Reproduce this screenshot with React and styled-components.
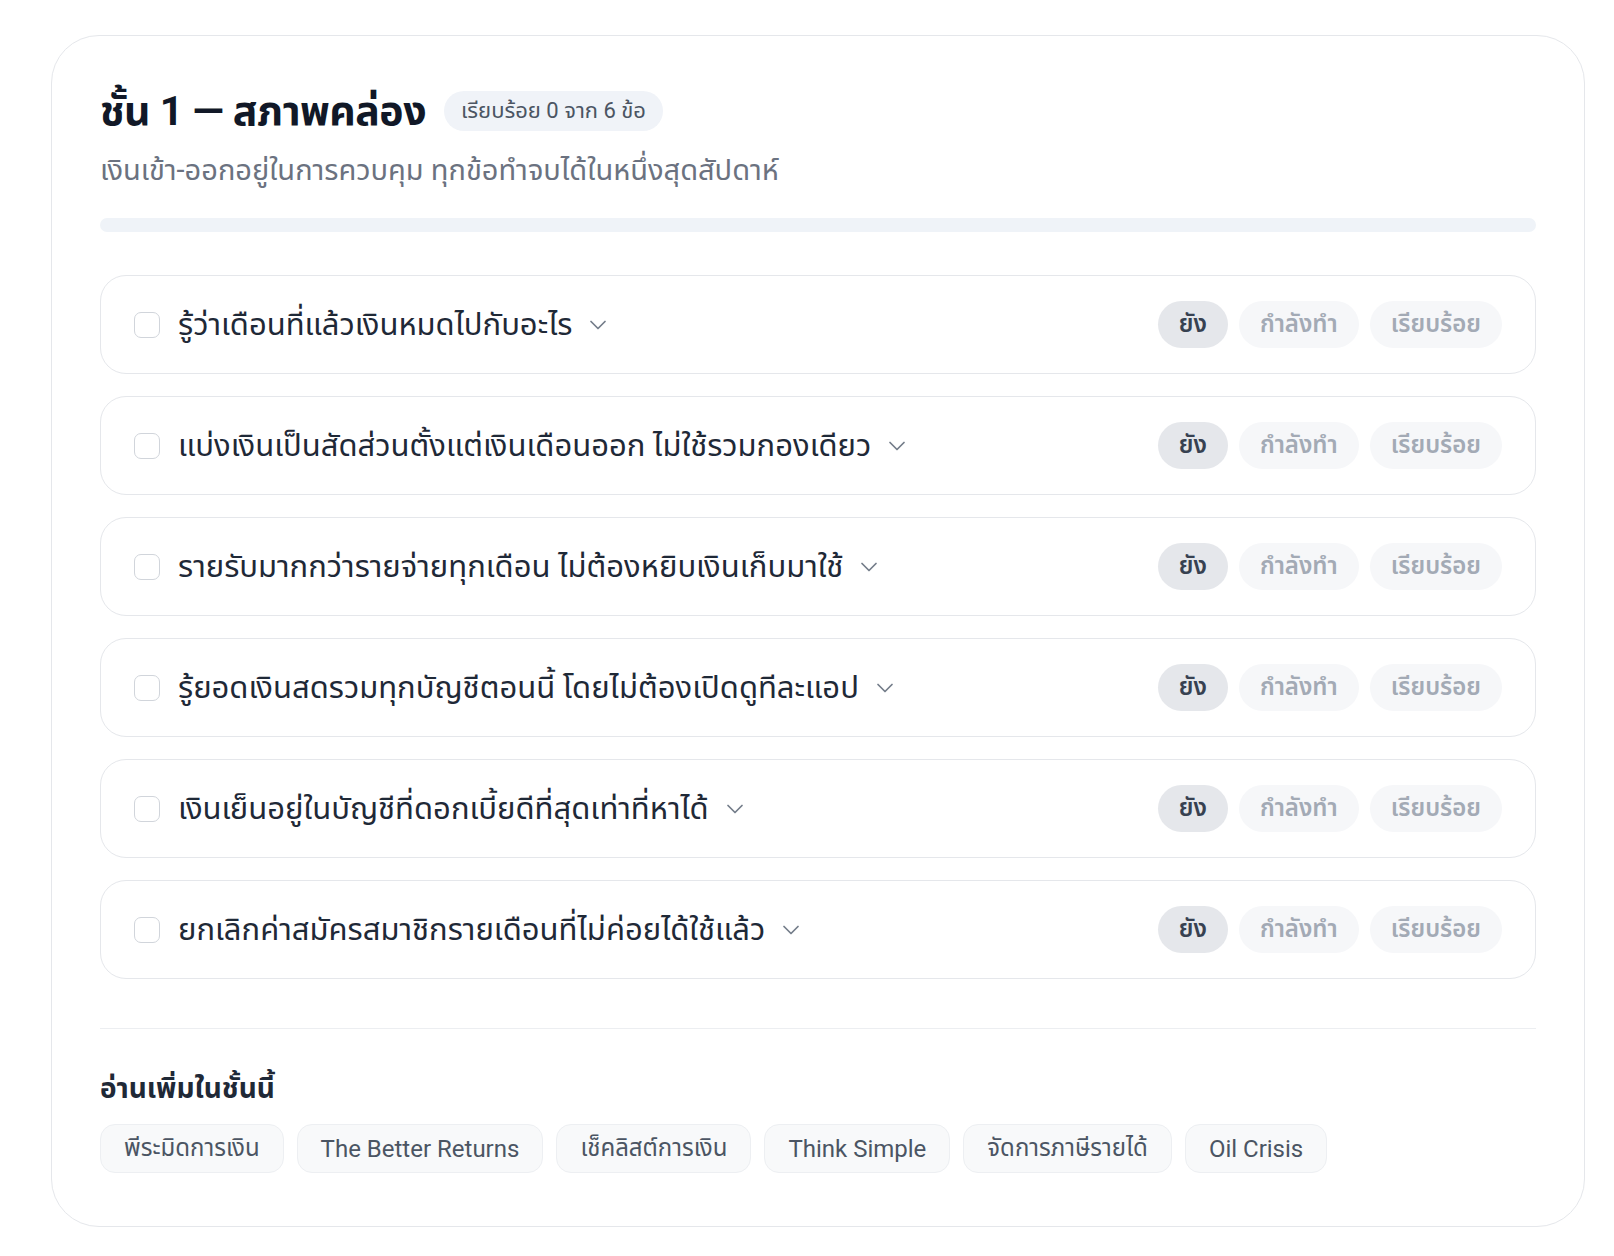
import { useState } from 'react';
import styled, { createGlobalStyle } from 'styled-components';
import { ChevronDown } from 'lucide-react';

const GlobalStyle = createGlobalStyle`
  body {
    margin: 0;
    background: #ffffff;
    font-family: Roboto, "Noto Sans Thai", "Noto Sans", sans-serif;
    color: #111827;
  }
`;

const Page = styled.div`
  padding: 35px 29px 31px 51px;
`;

const Card = styled.section`
  border: 1px solid #e5e7eb;
  border-radius: 48px;
  padding: 49px 48px 53px 48px;
  background: #fff;
`;

const Header = styled.div`
  display: flex;
  align-items: center;
  gap: 18px;
`;

const Title = styled.h2`
  margin: 0;
  font-size: 41px;
  font-weight: 700;
  line-height: 52px;
  color: #111827;
  letter-spacing: -0.5px;
`;

const CountBadge = styled.span`
  display: inline-flex;
  align-items: center;
  height: 40px;
  padding: 0 17px;
  border-radius: 20px;
  background: #f0f3f8;
  color: #4b5563;
  font-size: 22px;
`;

const Subtitle = styled.p`
  margin: 13px 0 0;
  font-size: 29px;
  line-height: 40px;
  color: #6b7280;
`;

const Track = styled.div`
  margin-top: 28px;
  height: 14px;
  border-radius: 7px;
  background: #eff3f8;
  overflow: hidden;
`;

const Fill = styled.div`
  height: 100%;
  background: #22c55e;
  border-radius: 7px;
`;

const List = styled.ul`
  list-style: none;
  margin: 43px 0 0;
  padding: 0;
  display: flex;
  flex-direction: column;
  gap: 22px;
`;

const Row = styled.li`
  display: flex;
  align-items: center;
  height: 99px;
  box-sizing: border-box;
  padding: 0 33px;
  border: 1px solid #e5e7eb;
  border-radius: 26px;
`;

const Check = styled.span`
  flex: none;
  width: 26px;
  height: 26px;
  box-sizing: border-box;
  border: 1.5px solid #d1d5db;
  border-radius: 7px;
  background: #fff;
`;

const ItemLabel = styled.span`
  margin-left: 18px;
  font-size: 31px;
  line-height: 42px;
  color: #1f2937;
`;

const Toggle = styled.span`
  display: inline-flex;
  margin-left: 12px;
  color: #747d8a;
`;

const Statuses = styled.div`
  margin-left: auto;
  display: flex;
  gap: 11px;
`;

const StatusPill = styled.button`
  height: 47px;
  padding: 0 21px;
  border: none;
  border-radius: 24px;
  font-family: inherit;
  font-size: 24px;
  font-weight: 600;
  background: ${(p) => (p.$active ? '#e5e7eb' : '#f6f7f9')};
  color: ${(p) => (p.$active ? '#374151' : '#a3aab5')};
  cursor: pointer;
`;

const Divider = styled.hr`
  margin: 49px 0 0;
  border: none;
  border-top: 1px solid #eceef1;
`;

const ReadMore = styled.h3`
  margin: 41px 0 0;
  font-size: 28px;
  font-weight: 700;
  line-height: 38px;
  color: #1f2937;
`;

const Chips = styled.div`
  margin-top: 16px;
  display: flex;
  flex-wrap: wrap;
  gap: 13px;
`;

const Chip = styled.a`
  display: inline-flex;
  align-items: center;
  height: 49px;
  box-sizing: border-box;
  padding: 0 23px;
  border: 1px solid #edeff2;
  border-radius: 15px;
  background: #f8f9fa;
  color: #4b5563;
  font-size: 24px;
  text-decoration: none;
`;

const items = [
  'รู้ว่าเดือนที่แล้วเงินหมดไปกับอะไร',
  'แบ่งเงินเป็นสัดส่วนตั้งแต่เงินเดือนออก ไม่ใช้รวมกองเดียว',
  'รายรับมากกว่ารายจ่ายทุกเดือน ไม่ต้องหยิบเงินเก็บมาใช้',
  'รู้ยอดเงินสดรวมทุกบัญชีตอนนี้ โดยไม่ต้องเปิดดูทีละแอป',
  'เงินเย็นอยู่ในบัญชีที่ดอกเบี้ยดีที่สุดเท่าที่หาได้',
  'ยกเลิกค่าสมัครสมาชิกรายเดือนที่ไม่ค่อยได้ใช้แล้ว',
];

const statuses = ['ยัง', 'กำลังทำ', 'เรียบร้อย'];

const links = [
  'พีระมิดการเงิน',
  'The Better Returns',
  'เช็คลิสต์การเงิน',
  'Think Simple',
  'จัดการภาษีรายได้',
  'Oil Crisis',
];

export default function App() {
  const [state, setState] = useState(items.map(() => 0));
  const done = state.filter((s) => s === 2).length;

  const setStatus = (i, s) =>
    setState((prev) => prev.map((v, j) => (j === i ? s : v)));

  return (
    <Page>
      <GlobalStyle />
      <Card>
        <Header>
          <Title>ชั้น 1 — สภาพคล่อง</Title>
          <CountBadge>
            เรียบร้อย {done} จาก {items.length} ข้อ
          </CountBadge>
        </Header>
        <Subtitle>
          เงินเข้า-ออกอยู่ในการควบคุม ทุกข้อทำจบได้ในหนึ่งสุดสัปดาห์
        </Subtitle>
        <Track>
          <Fill style={{ width: `${(done / items.length) * 100}%` }} />
        </Track>

        <List>
          {items.map((text, i) => (
            <Row key={text}>
              <Check />
              <ItemLabel>{text}</ItemLabel>
              <Toggle>
                <ChevronDown size={28} strokeWidth={1.5} />
              </Toggle>
              <Statuses>
                {statuses.map((s, k) => (
                  <StatusPill
                    key={s}
                    $active={state[i] === k}
                    onClick={() => setStatus(i, k)}
                  >
                    {s}
                  </StatusPill>
                ))}
              </Statuses>
            </Row>
          ))}
        </List>

        <Divider />
        <ReadMore>อ่านเพิ่มในชั้นนี้</ReadMore>
        <Chips>
          {links.map((l) => (
            <Chip key={l} href="#">
              {l}
            </Chip>
          ))}
        </Chips>
      </Card>
    </Page>
  );
}
